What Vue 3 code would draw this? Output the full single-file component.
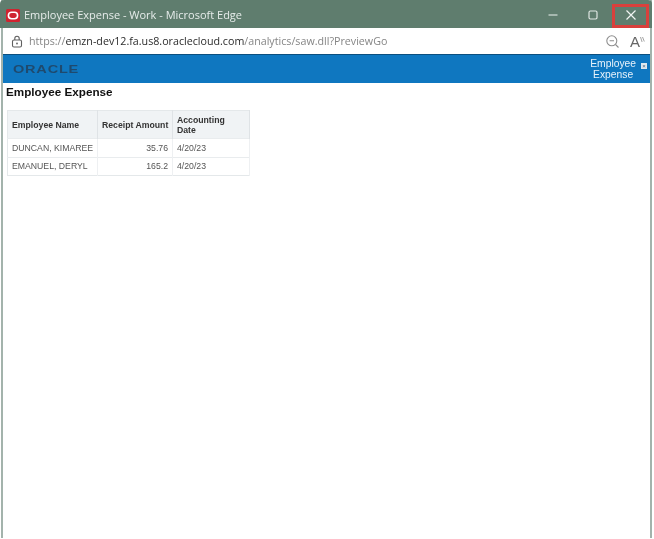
<template>
  <div class="window">
    <div class="titlebar">
      <svg class="app-icon" width="14" height="13" viewBox="0 0 14 13">
        <rect width="14" height="13" rx="1.5" fill="#d0232f" />
        <rect x="2.4" y="3.2" width="9.2" height="6.6" rx="3.2" fill="none" stroke="#fff" stroke-width="1.6" />
      </svg>
      <span class="title">Employee Expense - Work - Microsoft Edge</span>
      <div class="controls">
        <svg width="12" height="12" viewBox="0 0 12 12" class="ctl-min"><path d="M1.5 6h9" stroke="#d5dfda" stroke-width="1.2" /></svg>
        <svg width="12" height="12" viewBox="0 0 12 12" class="ctl-max"><rect x="2" y="2" width="8" height="8" rx="1.4" fill="none" stroke="#dfe7e3" stroke-width="1.2" /></svg>
        <svg width="12" height="12" viewBox="0 0 12 12" class="ctl-close"><path d="M1.5 1.5l9 9M10.5 1.5l-9 9" stroke="#f1f5f3" stroke-width="1.2" /></svg>
      </div>
    </div>

    <div class="addressbar">
      <svg width="12" height="13" viewBox="0 0 12 13" class="lock">
        <rect x="1.5" y="5" width="9" height="7" rx="1.5" fill="none" stroke="#5f5f5f" stroke-width="1.1" />
        <path d="M3.8 5V3.4a2.2 2.2 0 0 1 4.4 0V5" fill="none" stroke="#5f5f5f" stroke-width="1.1" />
        <circle cx="6" cy="8.5" r="0.9" fill="#5f5f5f" />
      </svg>
      <span class="url"><span class="dim">https://</span><span class="host">emzn-dev12.fa.us8.oraclecloud.com</span><span class="dim">/analytics/saw.dll?PreviewGo</span></span>
      <div class="addr-icons">
        <svg width="15" height="15" viewBox="0 0 15 15">
          <circle cx="6.8" cy="6.8" r="5" fill="none" stroke="#8d8d8d" stroke-width="1.1" />
          <path d="M4.6 6.8h4.4M10.5 10.5l3 3" stroke="#8d8d8d" stroke-width="1.1" />
        </svg>
        <span class="read">A<svg width="5" height="8" viewBox="0 0 5 8" class="read-marks"><path d="M0.5 1l1.6 5M2.5 1l1.8 4.5" stroke="#8d8d8d" stroke-width="0.8" fill="none" /></svg></span>
      </div>
    </div>

    <div class="banner">
      <span class="logo">ORACLE</span>
      <div class="banner-right">
        <span class="tab">Employee<br />Expense</span>
        <span class="tab-x">×</span>
      </div>
    </div>

    <div class="content">
      <h1>Employee Expense</h1>
      <table>
        <thead>
          <tr>
            <th class="c1">Employee Name</th>
            <th class="c2">Receipt Amount</th>
            <th class="c3">Accounting Date</th>
          </tr>
        </thead>
        <tbody>
          <tr v-for="row in rows" :key="row.name">
            <td>{{ row.name }}</td>
            <td class="num">{{ row.amount }}</td>
            <td>{{ row.date }}</td>
          </tr>
        </tbody>
      </table>
    </div>

    <div class="highlight"></div>
  </div>
</template>

<script setup>
const rows = [
  { name: 'DUNCAN, KIMAREE', amount: '35.76', date: '4/20/23' },
  { name: 'EMANUEL, DERYL', amount: '165.2', date: '4/20/23' },
]
</script>

<style>
html,
body {
  margin: 0;
  background: #fff;
}
</style>

<style scoped>
.window {
  position: relative;
  width: 654px;
  height: 539px;
  box-sizing: border-box;
  padding: 0 4px 0 3px;
  background: #fff;
  overflow: hidden;
  font-family: "Liberation Sans", Arial, sans-serif;
  filter: blur(0.3px);
}
.window::before,
.window::after {
  content: "";
  position: absolute;
  top: 0;
  bottom: 1px;
  width: 2px;
  background: #a3b3ac;
}
.window::before {
  left: 1px;
}
.window::after {
  right: 2px;
}
.titlebar {
  display: flex;
  align-items: center;
  height: 28px;
  margin: 0 -2px 0 -3px;
  padding: 0 2px 0 6px;
  background: #5f7d6e;
  border-radius: 4px 4px 0 0;
  position: relative;
  z-index: 1;
}
.app-icon {
  flex: none;
  margin-top: 2px;
}
.title {
  margin-left: 4px;
  font-family: "Open Sans", sans-serif;
  font-size: 11px;
  color: #e6ecea;
  white-space: nowrap;
}
.controls {
  margin-left: auto;
  margin-top: 2px;
  display: flex;
  align-items: center;
}
.ctl-min {
  margin-right: 28px;
}
.ctl-max {
  margin-right: 26px;
}
.ctl-close {
  margin-right: 13px;
}
.addressbar {
  display: flex;
  align-items: center;
  height: 26px;
  padding: 0 0 0 8px;
  background: #fff;
}
.lock {
  flex: none;
}
.url {
  margin-left: 6px;
  font-family: "Open Sans", sans-serif;
  font-size: 10.7px;
  white-space: nowrap;
}
.dim {
  color: #858585;
}
.host {
  color: #2b2b2b;
}
.addr-icons {
  margin-left: auto;
  margin-right: 5px;
  display: flex;
  align-items: center;
  gap: 10px;
}
.read {
  display: flex;
  color: #666;
  font-size: 15px;
  line-height: 15px;
}
.read-marks {
  margin-top: 2px;
}
.banner {
  display: flex;
  align-items: center;
  justify-content: space-between;
  height: 29px;
  background: #0f77c0;
  border-top: 1px solid #0c4f7f;
  box-sizing: border-box;
}
.logo {
  margin-left: 10px;
  font-size: 11px;
  font-weight: 700;
  letter-spacing: 0.6px;
  color: #1f4a6e;
  transform: scaleX(1.32);
  transform-origin: left center;
}
.banner-right {
  display: flex;
  align-items: flex-start;
  margin-right: 3px;
}
.tab {
  text-align: center;
  color: #e8f2fa;
  font-size: 10.3px;
  line-height: 11.5px;
}
.tab-x {
  width: 6px;
  height: 6px;
  margin: 5px 0 0 5px;
  background: #dfe8ee;
  color: #44607a;
  font-size: 6px;
  line-height: 6px;
  text-align: center;
}
.content {
  padding: 2px 0 0 3px;
}
h1 {
  margin: 0 0 12px;
  font-size: 11.7px;
  line-height: 13px;
  font-weight: 700;
  color: #111;
}
table {
  margin-left: 1px;
  width: 242px;
  table-layout: fixed;
  border-collapse: collapse;
  border: 1px solid #e4e8ea;
  font-size: 8.7px;
  color: #555;
}
th {
  height: 28px;
  box-sizing: border-box;
  padding: 0 2px 0 4px;
  background: #f0f3f5;
  border-right: 1px solid #dfe3e6;
  color: #333;
  text-align: left;
  line-height: 10px;
  font-weight: 700;
}
.c1 {
  width: 90px;
  padding-left: 4px;
}
.c2 {
  width: 75px;
  white-space: nowrap;
}
.c3 {
  width: 77px;
  padding-right: 20px;
}
td {
  height: 18.5px;
  box-sizing: border-box;
  padding: 0 4px;
  border-top: 1px solid #e9ecee;
  border-right: 1px solid #eef0f2;
  white-space: nowrap;
}
.num {
  text-align: right;
}
.highlight {
  position: absolute;
  left: 612px;
  top: 4px;
  width: 37px;
  height: 24px;
  box-sizing: border-box;
  border: 3px solid #d9403c;
  z-index: 2;
}
</style>
